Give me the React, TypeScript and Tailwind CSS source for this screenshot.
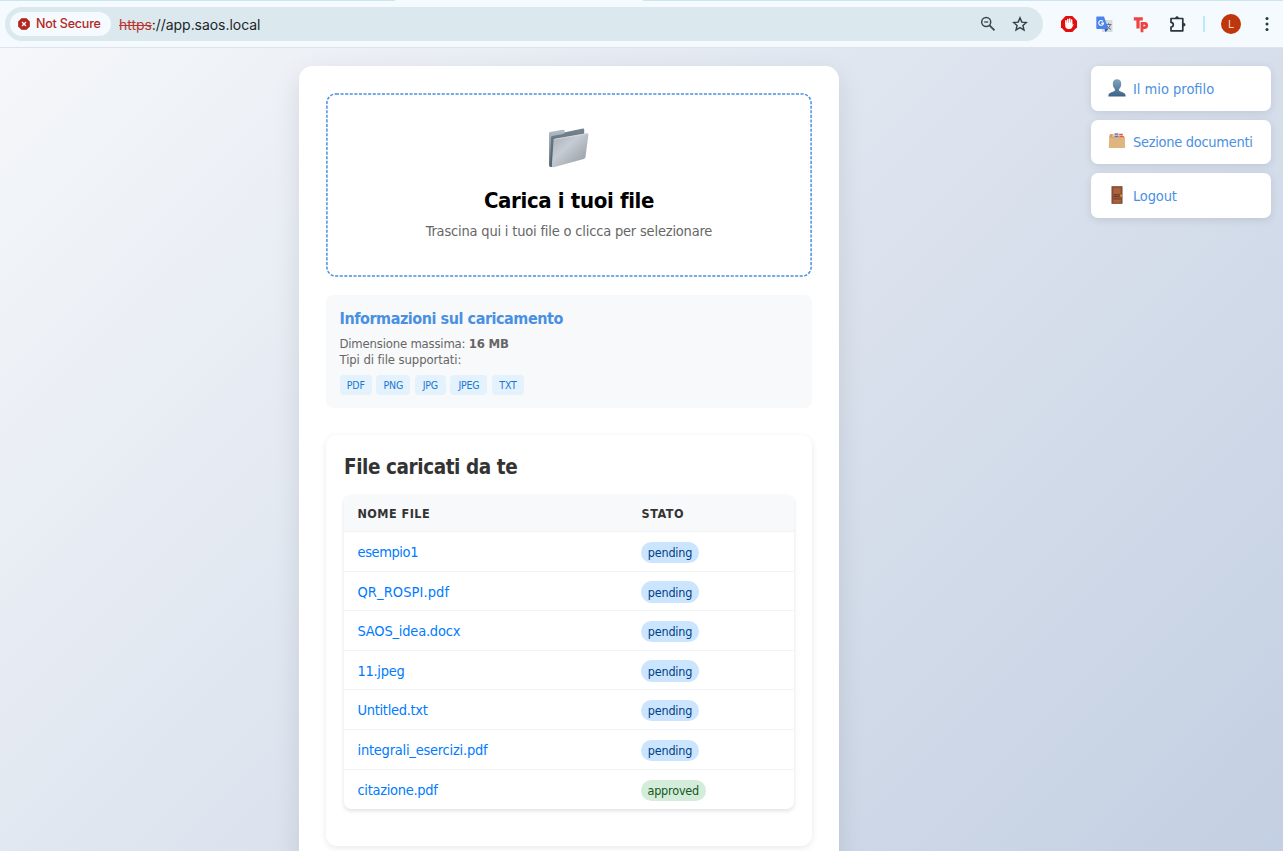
import React from "react";

type FileRow = { name: string; status: "pending" | "approved"; nameClass: string };

const files: FileRow[] = [
  { name: "esempio1", status: "pending", nameClass: "tracking-[-0.4px]" },
  { name: "QR_ROSPI.pdf", status: "pending", nameClass: "tracking-[0.1px]" },
  { name: "SAOS_idea.docx", status: "pending", nameClass: "tracking-[-0.2px]" },
  { name: "11.jpeg", status: "pending", nameClass: "tracking-[-0.3px]" },
  { name: "Untitled.txt", status: "pending", nameClass: "tracking-[-0.3px]" },
  { name: "integrali_esercizi.pdf", status: "pending", nameClass: "tracking-[-0.23px]" },
  { name: "citazione.pdf", status: "approved", nameClass: "tracking-[-0.3px]" },
];

const types = [
  { label: "PDF", box: "w-[32.5px]" },
  { label: "PNG", box: "w-[34px]" },
  { label: "JPG", box: "w-[31.5px]" },
  { label: "JPEG", box: "w-[37px]" },
  { label: "TXT", box: "w-[32.5px]" },
];

function Folder() {
  return (
    <svg width="44" height="44" viewBox="0 0 44 44" className="block">
      <defs>
        <linearGradient id="fBack" x1="0" y1="0" x2="0" y2="1">
          <stop offset="0" stopColor="#b3bdc5" />
          <stop offset="0.5" stopColor="#8d99a3" />
          <stop offset="1" stopColor="#5f6c77" />
        </linearGradient>
        <linearGradient id="fEdge" x1="0" y1="0" x2="0" y2="1">
          <stop offset="0" stopColor="#75848f" />
          <stop offset="1" stopColor="#4b5a66" />
        </linearGradient>
        <linearGradient id="fFront" x1="0" y1="0" x2="1" y2="1">
          <stop offset="0" stopColor="#a3acb6" />
          <stop offset="0.4" stopColor="#c6ccd3" />
          <stop offset="1" stopColor="#8d959d" />
        </linearGradient>
      </defs>
      <path d="M2 7.200Q2 6.300 3 6.100L15.800 3.700Q17.300 3.500 17.600 4.800L18 8L6 41H3.500Q2 41 2 39Z" fill="url(#fBack)" />
      <path d="M4 11.500Q4 10.300 5.200 10L15 8.200Q17.600 7.600 18 6.200L36 2.500Q37.200 2.300 37.200 3.700V14L6 41L3.300 40.500Z" fill="url(#fEdge)" />
      <path d="M6.600 14.300Q6.800 13 8.300 12.700L39.800 7.300Q41.600 7.100 41.400 8.800L38.500 31Q38.200 32.600 36.700 33L6.500 41.200Q4.600 41.700 4.800 39.500Z" fill="url(#fFront)" />
      <path d="M7 14.300Q7.200 13.300 8.300 13.100L39.800 7.700" fill="none" stroke="#dfe4e9" strokeWidth="0.700" />
    </svg>
  );
}

function Person() {
  return (
    <svg width="18" height="18" viewBox="0 0 18 18">
      <defs>
        <linearGradient id="pBody" x1="0" y1="0" x2="0" y2="1">
          <stop offset="0" stopColor="#7fa3bd" />
          <stop offset="1" stopColor="#3c6387" />
        </linearGradient>
      </defs>
      <path
        d="M9 0.300C11.800 0.300 13.300 2.300 13.200 5C13.100 7 12.500 8.600 11.400 9.800C11 10.300 10.900 11.500 11.500 12C13 13 17.400 13.200 17.600 16.500V17.600H0.400V16.500C0.600 13.200 5 13 6.500 12C7.100 11.500 7 10.300 6.600 9.800C5.500 8.600 4.900 7 4.800 5C4.700 2.300 6.200 0.300 9 0.300Z"
        fill="url(#pBody)"
      />
    </svg>
  );
}

function Dividers() {
  return (
    <svg width="18" height="18" viewBox="0 0 18 18">
      <path d="M1.500 5.500V3L2.500 2H5L6.500 3.500V5.500Z" fill="#d3a062" />
      <path d="M4.500 2.500L6 1.200H15V6H4.500Z" fill="#edd0ae" />
      <path d="M6.800 1.500H10.200V2.700H6.800ZM6.500 3.700H10.500V5H6.500Z" fill="#5468e6" />
      <path d="M11.300 2H14.300L15 3.200H11.500ZM11.600 4H15.800V5.500H11.600Z" fill="#e5533f" />
      <path d="M1.200 5H16.800L17.200 15.200Q17.200 16 16.400 16H1.600Q0.800 16 0.800 15.200Z" fill="#dfb57f" />
      <path d="M1 5.300H17" stroke="#c89a60" strokeWidth="0.600" />
    </svg>
  );
}

function Door() {
  return (
    <svg width="18" height="18" viewBox="0 0 18 18">
      <rect x="3.500" y="0.200" width="11" height="17.600" fill="#74422b" />
      <rect x="4.500" y="1.200" width="9" height="16.200" fill="#9a5738" />
      <rect x="5.700" y="2.200" width="6.800" height="6" fill="#a9633f" />
      <path d="M5.500 8.700H12.700M5.500 10.500H11.500M5.500 13H12.700" stroke="#6c3a23" strokeWidth="0.900" />
      <rect x="5.700" y="13.700" width="6.800" height="2.600" fill="#a9633f" />
      <circle cx="13.200" cy="9.700" r="1.100" fill="#d6a13d" />
    </svg>
  );
}

function Toolbar() {
  return (
    <header className="flex h-[47.5px] flex-col border-b border-[#dde5ea] bg-[#f4fafd]">
      <div className="flex h-px justify-between">
        <div className="w-[395px] bg-[#cbe6ee]" />
        <div className="w-[640px] bg-[#cbe6ee]" />
      </div>
      <div className="flex flex-1 items-center pl-[5px]">
        <div className="flex h-[34px] w-[1037.500px] items-center rounded-full bg-[#dbe9ee] pl-[5px]">
          <div className="flex h-6 w-[101px] items-center rounded-full bg-[#f4fafd] pl-2">
            <svg width="12" height="12" viewBox="0 0 12 12" className="mr-[6px]">
              <path d="M3.700 0.200H8.300L11.800 3.700V8.300L8.300 11.800H3.700L0.200 8.300V3.700Z" fill="#b3261e" stroke="#b3261e" strokeWidth="0.400" strokeLinejoin="round" />
              <path d="M4 4L8 8M8 4L4 8" stroke="#fff" strokeWidth="1.300" />
            </svg>
            <span className="whitespace-nowrap pt-px text-[12.500px] font-medium tracking-[-0.2px] text-[#b3261e]">Not Secure</span>
          </div>
          <div className="ml-2 whitespace-nowrap pt-px text-[14px] tracking-[-0.05px] text-[#1b2528]">
            <span className="text-[#b8352d] line-through">https</span>
            <span>://app.saos.local</span>
          </div>
          <svg width="16" height="16" viewBox="0 0 16 16" className="ml-auto mr-4" fill="none" stroke="#3b474b">
            <circle cx="6.200" cy="6" r="4.500" strokeWidth="1.500" />
            <path d="M9.500 9.300L14.500 14.300" strokeWidth="1.800" />
            <path d="M4.200 6H8.200" strokeWidth="1.300" />
          </svg>
          <svg width="16" height="16" viewBox="0 0 16 16" className="mr-[15px]" fill="none" stroke="#333f43" strokeWidth="1.400">
            <path d="M8 1.900L9.800 6.100L14.400 6.500L10.900 9.500L12 14L8 11.600L4 14L5.100 9.500L1.600 6.500L6.200 6.100Z" />
          </svg>
        </div>
        <div className="flex flex-1 items-center pl-[18.500px] pt-px">
          <svg width="16" height="16" viewBox="0 0 16 16">
            <path d="M4.700 0H11.300L16 4.700V11.300L11.300 16H4.700L0 11.300V4.700Z" fill="#e40d0d" />
            <path d="M4.900 7.500V4.800M6.800 7V3.500M8.700 7V3.100M10.600 7.500V4.100" stroke="#fff" strokeWidth="1.500" strokeLinecap="round" />
            <path d="M4.200 6.500H11.300V9L12 8Q12.800 8 12.500 8.800L10.800 11.900Q10 13 8.500 13H7.500Q4.200 12.800 4.200 9.500Z" fill="#fff" />
          </svg>
          <svg width="17" height="17" viewBox="0 0 17 17" className="ml-[19px]">
            <rect x="6" y="4" width="10.500" height="12" rx="0.800" fill="#d6dadd" />
            <path d="M9.500 8.500H15.500M12.500 7.200V8.500M14.500 8.500Q13.500 12 10.500 13.500M10.800 9.500Q12 12 15 13.500" stroke="#68757e" fill="none" />
            <path d="M8.500 13H12.300L9.500 16.200Z" fill="#2f56b8" />
            <path d="M1.200 0.500H8L12.300 13H1.200Q0.300 13 0.300 12V1.500Q0.300 0.500 1.200 0.500Z" fill="#4a83ee" />
            <path d="M7 5.400A2.400 2.400 0 1 0 7.500 7.100H5.200" fill="none" stroke="#fff" strokeWidth="1.100" />
          </svg>
          <svg width="17" height="17" viewBox="0 0 17 17" className="ml-5" fill="none" stroke="#ef4444" strokeWidth="3">
            <path d="M0.800 2.800H9.800M5 3V12.600" strokeWidth="3.200" />
            <path d="M9 6V16.200M9 7.300H11.600Q13.800 7.500 13.700 9.500Q13.500 11.500 11.600 11.600H9.500" strokeWidth="2.800" />
          </svg>
          <svg width="18" height="18" viewBox="0 0 18 18" className="ml-[19px]" fill="none" stroke="#27373c" strokeWidth="1.700" strokeLinejoin="round">
            <path d="M2 3.500H13.800V15.800H2V12Q4.300 11.800 4.300 9.700Q4.300 7.600 2 7.400Z" />
            <path d="M6.400 3.300Q6.600 1.500 8 1.500T9.600 3.300ZM14.300 8.100Q16.200 8.200 16.200 9.700T14.300 11.300Z" fill="#27373c" strokeWidth="0.600" />
          </svg>
          <div className="ml-[16px] h-4 w-[2px] bg-[#b9ecf8]" />
          <div className="ml-4 flex size-5 items-center justify-center rounded-full bg-[#bf360c] text-[11px] text-[#f5d8cc]">L</div>
          <svg width="4" height="16" viewBox="0 0 4 16" className="ml-6" fill="#27373c">
            <circle cx="2" cy="2.500" r="1.500" />
            <circle cx="2" cy="8" r="1.500" />
            <circle cx="2" cy="13.500" r="1.500" />
          </svg>
        </div>
      </div>
    </header>
  );
}

function NavButton({ icon, textClass, children }: { icon: React.ReactNode; textClass: string; children: React.ReactNode }) {
  return (
    <a className="flex h-[44.500px] items-center rounded-[7px] bg-white pl-[17.500px] text-[14.500px] text-[#4a90e2] shadow-[0_2px_9px_rgba(0,0,0,0.1)]">
      <span className="-mt-px mr-[7px] shrink-0">{icon}</span>
      <span className={`whitespace-nowrap pt-[3px] ${textClass}`}>{children}</span>
    </a>
  );
}

export default function App() {
  return (
    <div className="flex h-[851px] w-[1283px] flex-col overflow-hidden">
      <div className="font-['Inter',sans-serif]">
        <Toolbar />
      </div>
      <div className="flex min-h-0 flex-1 items-start bg-[linear-gradient(135deg,#f5f7fa_0%,#c3cfe2_100%)] pl-[299px] pt-[18.500px] font-['DejaVu_Sans_Condensed','DejaVu_Sans',sans-serif] [font-stretch:condensed]">
        <main className="h-[900px] w-[540px] shrink-0 rounded-[13.500px] bg-white px-[27px] pt-[27px] shadow-[0_9px_27px_rgba(0,0,0,0.1)]">
          <section className="relative flex h-[184px] flex-col items-center pt-[33px]">
            <svg width="486" height="184" className="absolute inset-0" fill="none">
              <rect x="0.900" y="0.900" width="484.200" height="182.200" rx="9" stroke="#4a90e2" strokeWidth="1.500" strokeDasharray="3.100 1.500" />
            </svg>
            <Folder />
            <h2 className="mt-[15px] whitespace-nowrap text-[22px] font-bold leading-[32px] tracking-[-0.35px] text-black">Carica i tuoi file</h2>
            <p className="mt-[4px] whitespace-nowrap text-[14.500px] leading-[20px] tracking-[-0.185px] text-[#666]">Trascina qui i tuoi file o clicca per selezionare</p>
          </section>

          <section className="mt-[18px] h-[113px] rounded-[7px] bg-[#f8f9fb] pl-[13.500px] pt-[14px] text-[#666]">
            <h3 className="text-[16px] font-bold leading-5 tracking-[-0.45px] text-[#4a90e2]">Informazioni sul caricamento</h3>
            <p className="mt-[7px] text-[13px] leading-4 tracking-[-0.2px]">
              Dimensione massima: <b>16 MB</b>
            </p>
            <p className="text-[13px] leading-4 tracking-[-0.1px]">Tipi di file supportati:</p>
            <div className="mt-[7px] flex gap-[4.300px]">
              {types.map((t) => (
                <span key={t.label} className={`flex h-[19.500px] items-center justify-center rounded-[4px] bg-[#e3f2fd] pt-[2px] text-[10.500px] tracking-[-0.2px] text-[#1976d2] ${t.box}`}>
                  {t.label}
                </span>
              ))}
            </div>
          </section>

          <section className="mt-[27px] h-[411px] rounded-[11px] bg-white px-[18px] pt-[18px] shadow-[0_2px_7px_rgba(0,0,0,0.09)]">
            <h2 className="text-[20.500px] font-bold leading-7 tracking-[-0.42px] text-[#333]">File caricati da te</h2>
            <div className="mt-[14px] overflow-hidden rounded-[7px] bg-white shadow-[0_2px_4px_rgba(0,0,0,0.12)]">
              <div className="flex h-[37px] items-center border-b border-[#f1f3f5] bg-[#f8f9fb] pl-[13.500px] pt-[2px] text-[12.500px] font-bold text-[#333]">
                <span className="w-[284px] tracking-[0.45px]">NOME FILE</span>
                <span className="tracking-[0.55px]">STATO</span>
              </div>
              {files.map((f) => (
                <div key={f.name} className="flex h-[39.600px] items-center border-b border-[#f1f3f5] pl-[13.500px] last:border-b-0">
                  <a className={`w-[283.500px] whitespace-nowrap pt-[3px] text-[14.500px] text-[#007bff] ${f.nameClass}`}>{f.name}</a>
                  <span
                    className={
                      f.status === "pending"
                        ? "mt-[2px] flex h-[21.500px] w-[58px] items-center justify-center rounded-full bg-[#cce5ff] pt-[2px] text-[12.500px] tracking-[-0.2px] text-[#004085]"
                        : "mt-[2px] flex h-[21.500px] w-[64.500px] items-center justify-center rounded-full bg-[#d4edda] pt-[2px] text-[12.500px] tracking-[-0.2px] text-[#155724]"
                    }
                  >
                    {f.status}
                  </span>
                </div>
              ))}
            </div>
          </section>
        </main>
        <nav className="ml-auto mr-[12.500px] flex w-[180px] flex-col gap-[9px]">
          <NavButton icon={<Person />} textClass="tracking-[0px]">Il mio profilo</NavButton>
          <NavButton icon={<Dividers />} textClass="tracking-[-0.3px]">Sezione documenti</NavButton>
          <NavButton icon={<Door />} textClass="tracking-[-0.15px]">Logout</NavButton>
        </nav>
      </div>
    </div>
  );
}
